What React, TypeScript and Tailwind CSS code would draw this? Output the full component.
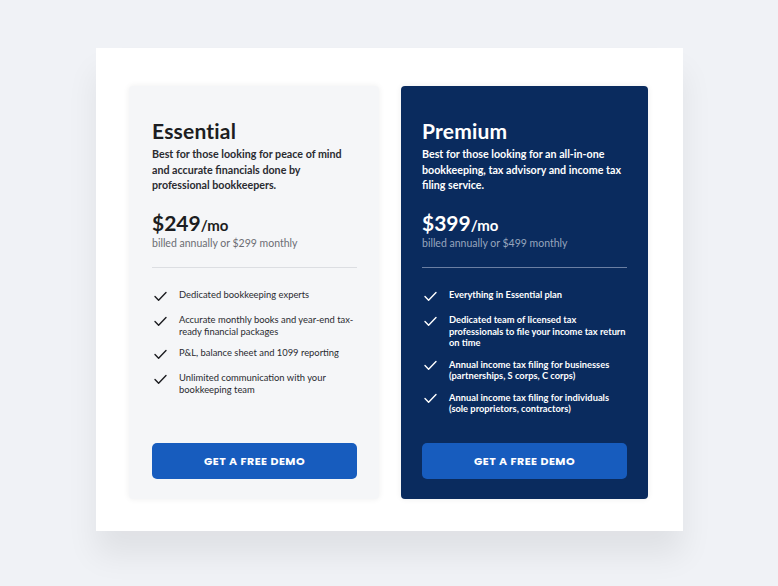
import React from "react"

interface Plan {
  name: string
  desc: string
  price: string
  billed: string
  features: string[]
  dark: boolean
}

const plans: Plan[] = [
  {
    name: "Essential",
    desc: "Best for those looking for peace of mind and accurate financials done by professional bookkeepers.",
    price: "$249",
    billed: "billed annually or $299 monthly",
    features: [
      "Dedicated bookkeeping experts",
      "Accurate monthly books and year-end tax-ready financial packages",
      "P&L, balance sheet and 1099 reporting",
      "Unlimited communication with your bookkeeping team",
    ],
    dark: false,
  },
  {
    name: "Premium",
    desc: "Best for those looking for an all-in-one bookkeeping, tax advisory and income tax filing service.",
    price: "$399",
    billed: "billed annually or $499 monthly",
    features: [
      "Everything in Essential plan",
      "Dedicated team of licensed tax professionals to file your income tax return on time",
      "Annual income tax filing for businesses (partnerships, S corps, C corps)",
      "Annual income tax filing for individuals (sole proprietors, contractors)",
    ],
    dark: true,
  },
]

const Check = ({ color }: { color: string }) => (
  <div className="h-[16px] w-[13px] shrink-0 flex items-center">
    <svg width="13" height="11" viewBox="0 0 13 11" fill="none">
      <path d="M1 5.5 L4.6 9.2 L12 1.4" stroke={color} strokeWidth="1.4" strokeLinecap="round" strokeLinejoin="round" />
    </svg>
  </div>
)

const PlanCard = ({ plan }: { plan: Plan }) => {
  const d = plan.dark
  return (
    <div
      className={`h-[413px] rounded-[4px] pt-[32px] pb-[20px] flex flex-col shadow-[0_0_6px_rgba(0,0,0,0.07)] ${
        d ? "w-[247px] pl-[21px] pr-[21px] bg-[#0a2b5e] text-white" : "w-[250px] pl-[23px] pr-[22px] bg-[#f5f6f8] text-[#1c1d21]"
      }`}
    >
      <h2 className="text-[21px] font-bold leading-[26px] tracking-[0.2px]">{plan.name}</h2>
      <p className={`mt-[2px] max-w-[202px] text-[10.7px] font-bold leading-[15.5px] ${d ? "text-white" : "text-[#2a2b30]"}`}>
        {plan.desc}
      </p>
      <div className="mt-[17px] flex items-baseline">
        <span className="text-[21px] font-bold leading-[26px]">{plan.price}</span>
        <span className="text-[15px] font-bold">/mo</span>
      </div>
      <p className={`text-[10.5px] leading-[14px] ${d ? "text-[#97a5bd]" : "text-[#6b6d73]"}`}>{plan.billed}</p>
      <div className={`mt-[17px] h-px ${d ? "bg-[#6b7fa3]" : "bg-[#dcdee2]"}`} />
      <ul className="mt-[20px] flex flex-col gap-[9px]">
        {plan.features.map((f) => (
          <li key={f} className="flex gap-[12px] pl-[2px]">
            <Check color={d ? "#ffffff" : "#1c1d21"} />
            <span
              className={`pt-[1px] leading-[11.5px] ${
                d ? "text-[9.3px] font-bold text-white" : "text-[9.4px] text-[#2a2b30]"
              }`}
            >
              {f}
            </span>
          </li>
        ))}
      </ul>
      <button className="mt-auto h-[36px] w-full rounded-[5px] bg-[#175cbe] text-white text-[11px] font-bold tracking-[0.5px] font-['Poppins','Inter',sans-serif]">
        GET A FREE DEMO
      </button>
    </div>
  )
}

const App = () => {
  return (
    <div className="w-[778px] h-[586px] bg-[#f0f2f6] font-['Lato',sans-serif] pt-[48px] pl-[96px]">
      <div className="w-[587px] h-[483px] bg-white shadow-[0_24px_30px_rgba(0,0,0,0.07)] pt-[38px] pl-[33px] flex gap-[22px]">
        {plans.map((p) => (
          <PlanCard key={p.name} plan={p} />
        ))}
      </div>
    </div>
  )
}

export default App
